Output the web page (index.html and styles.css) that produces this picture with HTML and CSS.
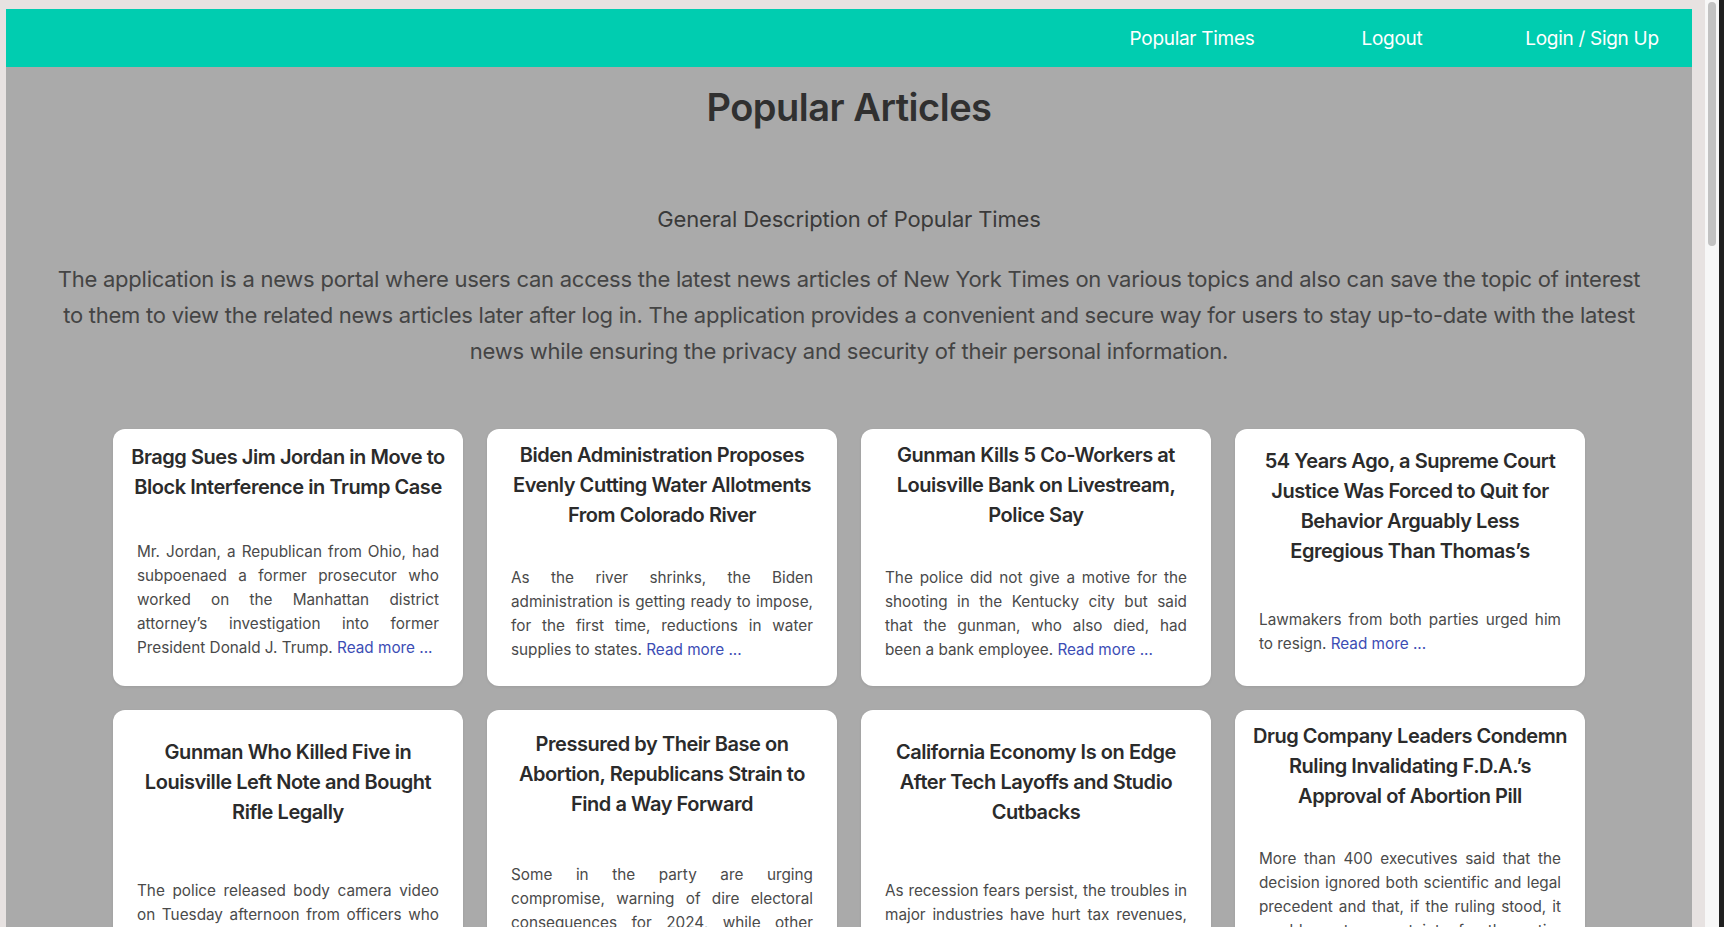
FILE: index.html
```html
<!DOCTYPE html>
<html lang="en">
<head>
<meta charset="utf-8">
<title>Popular Times</title>
<link rel="stylesheet" href="styles.css">
</head>
<body>
<div class="frame">
  <div class="page">
    <nav class="navbar">
      <a class="nav-link" href="#">Popular Times</a>
      <a class="nav-link" href="#">Logout</a>
      <a class="nav-link" href="#">Login / Sign Up</a>
    </nav>
    <main class="main">
      <h1 class="title">Popular Articles</h1>
      <h2 class="subtitle">General Description of Popular Times</h2>
      <p class="intro">The application is a news portal where users can access the latest news articles of New York Times on various topics and also can save the topic of interest to them to view the related news articles later after log in. The application provides a convenient and secure way for users to stay up-to-date with the latest news while ensuring the privacy and security of their personal information.</p>
      <section class="grid">
        <article class="card">
          <h3 class="card-title">Bragg Sues Jim Jordan in Move to Block Interference in Trump Case</h3>
          <p class="card-text">Mr. Jordan, a Republican from Ohio, had subpoenaed a former prosecutor who worked on the Manhattan district attorney’s investigation into former President Donald J. Trump. <a class="more" href="#">Read more ...</a></p>
        </article>
        <article class="card">
          <h3 class="card-title">Biden Administration Proposes Evenly Cutting Water Allotments From Colorado River</h3>
          <p class="card-text">As the river shrinks, the Biden administration is getting ready to impose, for the first time, reductions in water supplies to states. <a class="more" href="#">Read more ...</a></p>
        </article>
        <article class="card">
          <h3 class="card-title">Gunman Kills 5 Co-Workers at Louisville Bank on Livestream, Police Say</h3>
          <p class="card-text">The police did not give a motive for the shooting in the Kentucky city but said that the gunman, who also died, had been a bank employee. <a class="more" href="#">Read more ...</a></p>
        </article>
        <article class="card">
          <h3 class="card-title">54 Years Ago, a Supreme Court Justice Was Forced to Quit for Behavior Arguably Less Egregious Than Thomas’s</h3>
          <p class="card-text">Lawmakers from both parties urged him to resign. <a class="more" href="#">Read more ...</a></p>
        </article>
        <article class="card">
          <h3 class="card-title">Gunman Who Killed Five in Louisville Left Note and Bought Rifle Legally</h3>
          <p class="card-text">The police released body camera video on Tuesday afternoon from officers who responded to the shooting at a downtown bank. <a class="more" href="#">Read more ...</a></p>
        </article>
        <article class="card">
          <h3 class="card-title">Pressured by Their Base on Abortion, Republicans Strain to Find a Way Forward</h3>
          <p class="card-text">Some in the party are urging compromise, warning of dire electoral consequences for 2024, while other Republicans are pushing for more restrictions. <a class="more" href="#">Read more ...</a></p>
        </article>
        <article class="card">
          <h3 class="card-title">California Economy Is on Edge After Tech Layoffs and Studio Cutbacks</h3>
          <p class="card-text">As recession fears persist, the troubles in major industries have hurt tax revenues, leaving the state with a $22.5 billion budget gap. <a class="more" href="#">Read more ...</a></p>
        </article>
        <article class="card">
          <h3 class="card-title">Drug Company Leaders Condemn Ruling Invalidating F.D.A.’s Approval of Abortion Pill</h3>
          <p class="card-text">More than 400 executives said that the decision ignored both scientific and legal precedent and that, if the ruling stood, it would create uncertainty for the entire pharmaceutical industry and chill the development of new drugs. <a class="more" href="#">Read more ...</a></p>
        </article>
      </section>
    </main>
  </div>
  <div class="gutter"></div>
  <div class="scroll-track"><div class="scroll-thumb"></div></div>
  <div class="side-strip"></div>
</div>
</body>
</html>
```
FILE: styles.css
```css
html, body {
  margin: 0;
  padding: 0;
  height: 927px;
  overflow: hidden;
}

body {
  background: #e7e2e1;
  font-family: Inter, "Noto Sans", sans-serif;
}

.frame {
  display: flex;
  height: 927px;
}

.page {
  width: 1686px;
  margin: 9px 0 0 6px;
  background: #aaaaaa;
  overflow: hidden;
}

.navbar {
  height: 58px;
  background: #00cdb0;
  display: flex;
  justify-content: flex-end;
  align-items: center;
}

.nav-link {
  width: 200px;
  text-align: center;
  color: #ffffff;
  font-size: 19px;
  letter-spacing: -0.3px;
  text-decoration: none;
}

.main {
  display: flex;
  flex-direction: column;
  align-items: center;
}

.title {
  margin: 17px 0 0;
  font-size: 38px;
  line-height: 46px;
  font-weight: 600;
  letter-spacing: -0.5px;
  color: #303030;
}

.subtitle {
  margin: 74px 0 0;
  font-size: 22px;
  line-height: 30px;
  font-weight: 400;
  letter-spacing: -0.15px;
  color: #3a3a3a;
}

.intro {
  margin: 27px 0 0;
  padding: 0 46px;
  font-size: 22px;
  line-height: 36px;
  letter-spacing: -0.25px;
  text-align: center;
  color: #444444;
}

.grid {
  margin-top: 60px;
  display: grid;
  grid-template-columns: repeat(4, 350px);
  gap: 24px;
}

.card {
  background: #ffffff;
  border-radius: 12px;
  padding: 11px 16px 24px;
  display: flex;
  flex-direction: column;
  justify-content: space-evenly;
  box-shadow: 0 1px 3px rgba(0, 0, 0, 0.08);
}

.card-title {
  margin: 0 1.75px 36px;
  font-size: 20px;
  line-height: 30px;
  font-weight: 600;
  letter-spacing: -0.45px;
  text-align: center;
  color: #2b2b2b;
}

.card-text {
  margin: 0;
  padding: 0 8px;
  font-size: 15.3px;
  line-height: 24px;
  text-align: justify;
  color: #4a4a4a;
}

.more {
  color: #3c4db5;
  text-decoration: none;
}

.gutter {
  width: 13px;
}

.scroll-track {
  width: 14px;
  background: #f7f7f7;
  position: relative;
}

.scroll-thumb {
  position: absolute;
  left: 3px;
  top: 2px;
  width: 8px;
  height: 244px;
  border-radius: 4px;
  background: #c2c2c2;
}

.side-strip {
  flex: 1;
  background: #202020;
}
```
